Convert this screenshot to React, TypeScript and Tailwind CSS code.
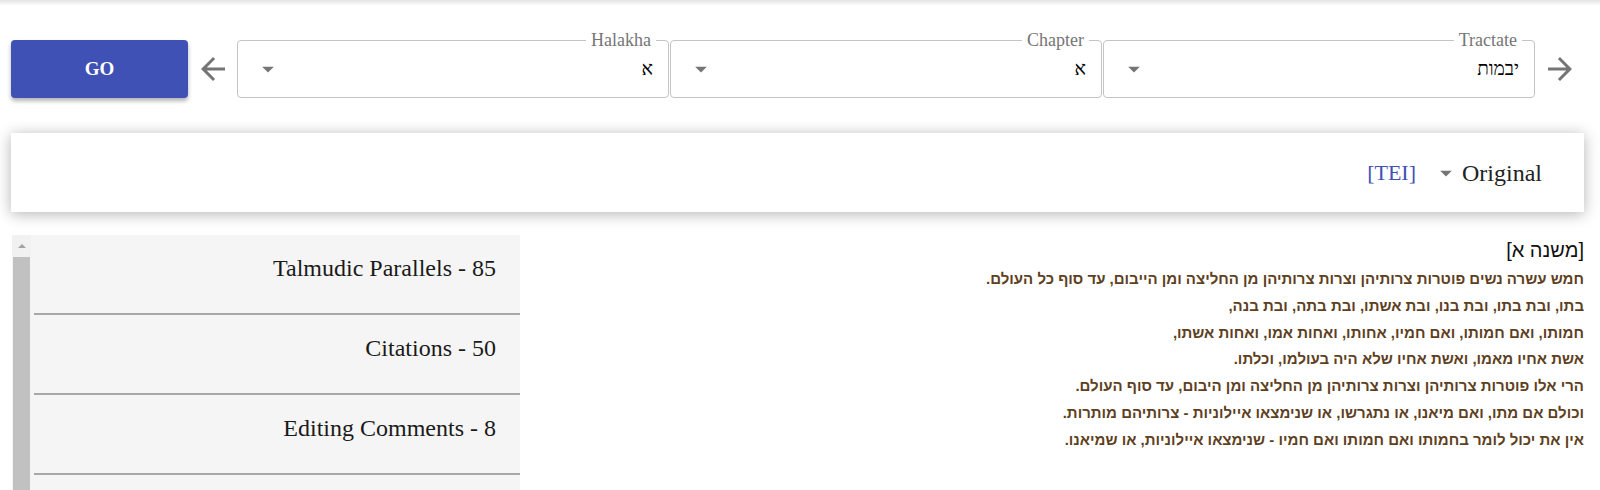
import React from "react";

const serif = { fontFamily: '"Liberation Serif", "DejaVu Serif", serif' };

const ArrowDrop = ({ className = "" }: { className?: string }) => (
  <svg viewBox="0 0 24 24" className={className} fill="#757575">
    <path d="M7 10l5 5 5-5z" />
  </svg>
);

const ArrowBack = () => (
  <svg viewBox="0 0 24 24" className="w-9 h-9" fill="#757575">
    <path d="M20 11H7.83l5.59-5.59L12 4l-8 8 8 8 1.41-1.41L7.83 13H20v-2z" />
  </svg>
);

const ArrowForward = () => (
  <svg viewBox="0 0 24 24" className="w-9 h-9" fill="#757575">
    <path d="M12 4l-1.41 1.41L16.17 11H4v2h12.17l-5.58 5.59L12 20l8-8z" />
  </svg>
);

interface SelectProps {
  label: string;
  value: string;
}

const OutlinedSelect = ({ label, value }: SelectProps) => (
  <div className="relative w-[432px] h-[58px] border border-[#c4c4c4] rounded-[4px] flex items-center justify-between pl-[16px] pr-[15px]">
    <span className="absolute -top-[12px] right-[12px] bg-white px-[5px] text-[18px] leading-[22px] text-[#757575]">
      {label}
    </span>
    <ArrowDrop className="w-7 h-7" />
    <span
      dir="rtl"
      className="text-[19px] text-black"
      style={{ fontFamily: '"Liberation Serif", "DejaVu Sans", serif' }}
    >
      {value}
    </span>
  </div>
);

const parallels = ["Talmudic Parallels - 85", "Citations - 50", "Editing Comments - 8", ""];

const lines = [
  "חמש עשרה נשים פוטרות צרותיהן וצרות צרותיהן מן החליצה ומן הייבום, עד סוף כל העולם.",
  "בתו, ובת בתו, ובת בנו, ובת אשתו, ובת בתה, ובת בנה,",
  "חמותו, ואם חמותו, ואם חמיו, אחותו, ואחות אמו, ואחות אשתו,",
  "אשת אחיו מאמו, ואשת אחיו שלא היה בעולמו, וכלתו.",
  "הרי אלו פוטרות צרותיהן וצרות צרותיהן מן החליצה ומן היבום, עד סוף העולם.",
  "וכולם אם מתו, ואם מיאנו, או נתגרשו, או שנימצאו איילוניות - צרותיהם מותרות.",
  "אין את יכול לומר בחמותו ואם חמותו ואם חמיו - שנימצאו איילוניות, או שמיאנו.",
];

const App = () => {
  return (
    <div className="min-h-screen bg-white overflow-hidden" style={serif}>
      <div className="h-[6px] bg-gradient-to-b from-[#e4e4e4] to-white" />

      <div className="flex items-center pl-[11px] pt-[34px]">
        <button className="w-[177px] h-[58px] rounded-[4px] bg-[#3f51b5] text-white font-bold text-[19px] shadow-[0_3px_4px_rgba(0,0,0,0.3)]">
          GO
        </button>
        <div className="ml-[7px] mr-[6px] flex items-center">
          <ArrowBack />
        </div>
        <div className="flex gap-[1px]">
          <OutlinedSelect label="Halakha" value="א" />
          <OutlinedSelect label="Chapter" value="א" />
          <OutlinedSelect label="Tractate" value="יבמות" />
        </div>
        <div className="ml-[7px] flex items-center">
          <ArrowForward />
        </div>
      </div>

      <div className="mt-[35px] ml-[11px] w-[1573px] h-[79px] bg-white shadow-[0_2px_14px_rgba(0,0,0,0.3)] flex items-center justify-end pr-[42px]">
        <span className="text-[22px] text-[#3f51b5]">[TEI]</span>
        <ArrowDrop className="w-7 h-7 ml-[16px] mr-[2px]" />
        <span className="text-[24px] text-[#222]">Original</span>
      </div>

      <div className="mt-[23px] flex">
        <div className="ml-[12px] w-[508px] h-[260px] bg-[#f5f5f5] flex">
          <div className="w-[19px] flex flex-col">
            <div className="h-[22px] bg-[#f1f1f1] flex items-center justify-center">
              <div className="w-0 h-0 border-l-[4px] border-r-[4px] border-b-[4px] border-l-transparent border-r-transparent border-b-[#a3a3a3]" />
            </div>
            <div className="flex-1 mx-[1px] bg-[#c1c1c1]" />
          </div>
          <div className="flex-1 pl-[3px]">
            {parallels.map((p, i) => (
              <div
                key={i}
                className={`h-[80px] pt-[19px] pr-[24px] text-right text-[24px] leading-[28px] text-[#1a1a1a] ${
                  p ? "border-b-2 border-[#a8a8a8]" : ""
                }`}
              >
                {p}
              </div>
            ))}
          </div>
        </div>

        <div
          dir="rtl"
          className="flex-1 pr-[16px] pt-[3px]"
          style={{ fontFamily: '"Liberation Sans", "DejaVu Sans", sans-serif' }}
        >
          <div className="text-[20px] leading-[25px] text-[#111] mb-[3px]">[משנה א]</div>
          {lines.map((l, i) => (
            <div key={i} className="text-[15px] leading-[26.8px] font-bold text-[#5e3f22]">
              {l}
            </div>
          ))}
        </div>
      </div>
    </div>
  );
};

export default App;
